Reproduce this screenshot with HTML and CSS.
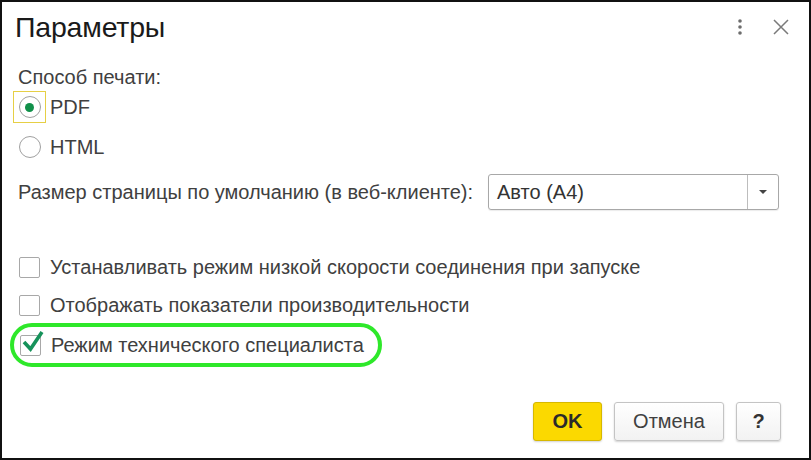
FILE: index.html
```html
<!DOCTYPE html>
<html lang="ru">
<head>
    <meta charset="UTF-8">
    <title>Параметры</title>
    <link rel="stylesheet" href="styles.css">
</head>
<body>
    <div class="dialog">
        <div class="header">
            <div class="title">Параметры</div>
            <div class="header-tools">
                <svg class="tool" width="12" height="20" viewBox="0 0 12 20">
                    <circle cx="6" cy="4" r="1.8" fill="#6d6d6d"/>
                    <circle cx="6" cy="10" r="1.8" fill="#6d6d6d"/>
                    <circle cx="6" cy="16" r="1.8" fill="#6d6d6d"/>
                </svg>
                <svg class="tool" width="18" height="18" viewBox="0 0 18 18">
                    <path d="M2 2 L16 16 M16 2 L2 16" stroke="#7a7a7a" stroke-width="1.5" fill="none"/>
                </svg>
            </div>
        </div>

        <div class="content">
            <div class="label-row">Способ печати:</div>
            <div class="radio-row">
                <span class="radio-focus"><span class="radio checked"></span></span>
                <span class="radio-text">PDF</span>
            </div>
            <div class="radio-row second">
                <span class="radio-focus blank"><span class="radio"></span></span>
                <span class="radio-text">HTML</span>
            </div>

            <div class="size-row">
                <span class="size-label">Размер страницы по умолчанию (в веб-клиенте):</span>
                <div class="select">
                    <span class="select-value">Авто (A4)</span>
                    <span class="select-btn"><span class="arrow"></span></span>
                </div>
            </div>

            <div class="checks">
                <div class="check-row">
                    <span class="checkbox"></span>
                    <span>Устанавливать режим низкой скорости соединения при запуске</span>
                </div>
                <div class="check-row">
                    <span class="checkbox"></span>
                    <span>Отображать показатели производительности</span>
                </div>
                <div class="check-row marked">
                    <span class="checkbox">
                        <svg class="tick" width="24" height="24" viewBox="0 0 24 24">
                            <path d="M3 12 L9.5 19 L21 2" stroke="#16925a" stroke-width="3.6" fill="none" stroke-linejoin="miter"/>
                        </svg>
                    </span>
                    <span>Режим технического специалиста</span>
                </div>
            </div>
        </div>

        <div class="footer">
            <button class="btn btn-ok">OK</button>
            <button class="btn btn-cancel">Отмена</button>
            <button class="btn btn-help">?</button>
        </div>
    </div>
</body>
</html>
```

FILE: styles.css
```css
body {
    margin: 0;
    background-color: #fff;
    font-family: "Liberation Sans", Arial, sans-serif;
    color: #404040;
}

.dialog {
    width: 811px;
    height: 460px;
    box-sizing: border-box;
    border: 2px solid #111;
    background-color: #fff;
    display: flex;
    flex-direction: column;
}

.header {
    height: 50px;
    display: flex;
    align-items: center;
    justify-content: space-between;
    padding: 0 19px 0 13px;
}

.title {
    font-size: 28.5px;
    color: #1a1a1a;
    letter-spacing: -0.2px;
}

.header-tools {
    display: flex;
    align-items: center;
    gap: 26px;
}

.tool {
    display: block;
}

.content {
    padding-left: 16px;
    font-size: 20px;
}

.label-row {
    margin-top: 11px;
    height: 28px;
    line-height: 28px;
}

.radio-row {
    height: 32px;
    display: flex;
    align-items: center;
    margin-left: -5px;
}

.radio-row.second {
    margin-top: 8px;
}

.radio-focus {
    width: 33px;
    height: 32px;
    border: 1px solid #e6cf45;
    display: flex;
    align-items: center;
    justify-content: center;
    box-sizing: border-box;
}

.radio-focus.blank {
    border-color: transparent;
}

.radio {
    width: 22px;
    height: 22px;
    border: 1px solid #a0a0a0;
    border-radius: 50%;
    box-sizing: border-box;
    display: flex;
    align-items: center;
    justify-content: center;
    background-color: #fff;
}

.radio.checked::after {
    content: "";
    width: 9px;
    height: 9px;
    border-radius: 50%;
    background-color: #11904a;
}

.radio-text {
    margin-left: 4px;
}

.size-row {
    margin-top: 11px;
    display: flex;
    align-items: center;
    height: 36px;
}

.size-label {
    width: 470px;
}

.select {
    width: 291px;
    height: 36px;
    box-sizing: border-box;
    border: 1px solid #a8a8a8;
    border-radius: 3px;
    display: flex;
    align-items: center;
    box-shadow: 0 1px 1px rgba(0,0,0,0.08);
}

.select-value {
    flex: 1;
    padding-left: 8px;
    color: #333;
}

.select-btn {
    width: 30px;
    height: 100%;
    border-left: 1px solid #bdbdbd;
    display: flex;
    align-items: center;
    justify-content: center;
}

.arrow {
    width: 0;
    height: 0;
    border-left: 4px solid transparent;
    border-right: 4px solid transparent;
    border-top: 4px solid #444;
}

.checks {
    margin-top: 38px;
}

.check-row {
    height: 38px;
    display: flex;
    align-items: center;
}

.check-row.marked {
    width: fit-content;
    height: 44px;
    box-sizing: border-box;
    margin-top: -1px;
    margin-left: -8px;
    padding: 0 14px 0 5px;
    border: 4px solid #2ee82a;
    border-radius: 22px;
}

.checkbox {
    width: 21px;
    height: 21px;
    box-sizing: border-box;
    border: 1px solid #a8a8a8;
    border-radius: 2px;
    margin-left: 1px;
    margin-right: 10px;
    position: relative;
    background-color: #fff;
}

.tick {
    position: absolute;
    left: 0;
    top: -6px;
}

.footer {
    margin-top: auto;
    display: flex;
    justify-content: flex-end;
    gap: 12px;
    padding: 0 28px 17px 0;
}

.btn {
    height: 39px;
    padding: 0;
    font-family: "Liberation Sans", Arial, sans-serif;
    font-size: 20px;
    color: #404040;
    border: 1px solid #c4c4c4;
    border-radius: 3px;
    background: linear-gradient(#ffffff, #f2f2f2);
    box-shadow: 0 1px 2px rgba(0,0,0,0.18);
}

.btn-ok {
    width: 69px;
    font-weight: bold;
    color: #2a2a2a;
    background: #fbd900;
    border-color: #d7b800;
}

.btn-cancel {
    width: 110px;
}

.btn-help {
    width: 45px;
    font-weight: bold;
    color: #333;
}
```
